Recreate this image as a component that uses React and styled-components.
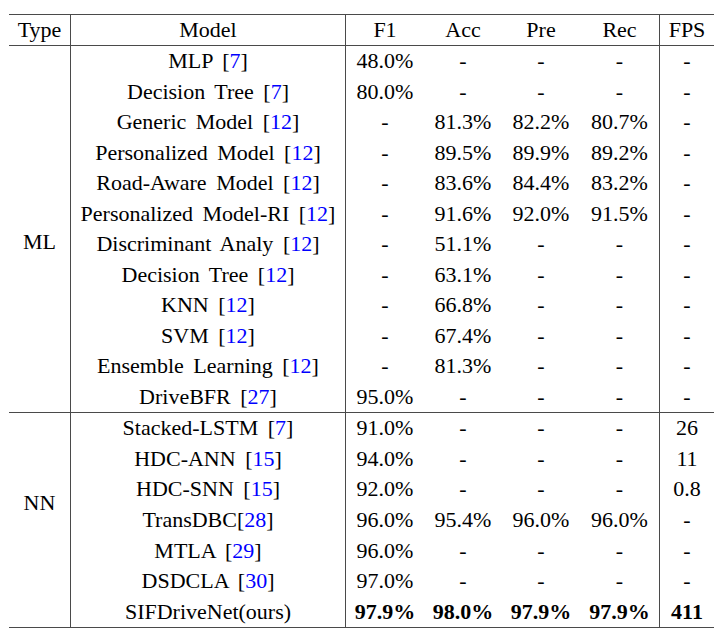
import React from "react";
import styled, { createGlobalStyle } from "styled-components";

const GlobalStyle = createGlobalStyle`
  html, body { margin: 0; padding: 0; background: #ffffff; }
  body {
    font-family: "Liberation Serif", "Times New Roman", serif;
    color: #000;
  }
`;

const LINE = "1px solid #4a4a4a";
const COLS = "62px 275px 78px 78px 78px 80px 54px";

const Page = styled.div`
  padding: 14px 0 0 9px;
`;

const Table = styled.div`
  width: 705px;
  border-top: ${LINE};
  border-bottom: ${LINE};
  font-family: "Liberation Serif", "Times New Roman", serif;
  font-size: 22px;
  line-height: 30px;
`;

const HeaderRow = styled.div`
  display: grid;
  grid-template-columns: ${COLS};
  grid-template-rows: 30px;
  border-bottom: ${LINE};
`;

const Section = styled.div`
  display: grid;
  grid-template-columns: ${COLS};
  grid-template-rows: repeat(${(p) => p.$rows}, ${(p) => p.$rowHeight}px);
  border-bottom: ${(p) => (p.$last ? "none" : LINE)};
`;

const Cell = styled.div`
  box-sizing: border-box;
  display: flex;
  align-items: center;
  justify-content: center;
  white-space: pre;
  font-weight: ${(p) => (p.$bold ? 700 : 400)};
  border-right: ${(p) => (p.$divider ? LINE : "none")};
`;

const ModelCell = styled(Cell)`
  word-spacing: 4px;
`;

const TypeCell = styled.div`
  box-sizing: border-box;
  grid-column: 1;
  grid-row: 1 / span ${(p) => p.$span};
  border-right: ${LINE};
  padding-top: ${(p) => p.$offset}px;
  text-align: center;
  line-height: 30px;
`;

const Cite = styled.span`
  color: #0000ff;
`;

const mlRows = [
  ["MLP", " ", "7", "48.0%", "-", "-", "-", "-"],
  ["Decision Tree", " ", "7", "80.0%", "-", "-", "-", "-"],
  ["Generic Model", " ", "12", "-", "81.3%", "82.2%", "80.7%", "-"],
  ["Personalized Model", " ", "12", "-", "89.5%", "89.9%", "89.2%", "-"],
  ["Road-Aware Model", " ", "12", "-", "83.6%", "84.4%", "83.2%", "-"],
  ["Personalized Model-RI", " ", "12", "-", "91.6%", "92.0%", "91.5%", "-"],
  ["Discriminant Analy", " ", "12", "-", "51.1%", "-", "-", "-"],
  ["Decision Tree", " ", "12", "-", "63.1%", "-", "-", "-"],
  ["KNN", " ", "12", "-", "66.8%", "-", "-", "-"],
  ["SVM", " ", "12", "-", "67.4%", "-", "-", "-"],
  ["Ensemble Learning", " ", "12", "-", "81.3%", "-", "-", "-"],
  ["DriveBFR", " ", "27", "95.0%", "-", "-", "-", "-"],
];

const nnRows = [
  ["Stacked-LSTM", " ", "7", "91.0%", "-", "-", "-", "26"],
  ["HDC-ANN", " ", "15", "94.0%", "-", "-", "-", "11"],
  ["HDC-SNN", " ", "15", "92.0%", "-", "-", "-", "0.8"],
  ["TransDBC", "", "28", "96.0%", "95.4%", "96.0%", "96.0%", "-"],
  ["MTLA", " ", "29", "96.0%", "-", "-", "-", "-"],
  ["DSDCLA", " ", "30", "97.0%", "-", "-", "-", "-"],
  ["SIFDriveNet(ours)", "", null, "97.9%", "98.0%", "97.9%", "97.9%", "411", true],
];

function ModelName({ name, sep, cite }) {
  return (
    <span>
      {name}
      {cite != null && (
        <>
          {sep}[<Cite>{cite}</Cite>]
        </>
      )}
    </span>
  );
}

function DataRow({ row }) {
  const [name, sep, cite, f1, acc, pre, rec, fps, bold] = row;
  return (
    <>
      <ModelCell $divider>
        <ModelName name={name} sep={sep} cite={cite} />
      </ModelCell>
      <Cell $bold={bold}>{f1}</Cell>
      <Cell $bold={bold}>{acc}</Cell>
      <Cell $bold={bold}>{pre}</Cell>
      <Cell $bold={bold} $divider>
        {rec}
      </Cell>
      <Cell $bold={bold}>{fps}</Cell>
    </>
  );
}

export default function App() {
  return (
    <>
      <GlobalStyle />
      <Page>
        <Table>
          <HeaderRow>
            <Cell $divider>Type</Cell>
            <Cell $divider>Model</Cell>
            <Cell>F1</Cell>
            <Cell>Acc</Cell>
            <Cell>Pre</Cell>
            <Cell $divider>Rec</Cell>
            <Cell>FPS</Cell>
          </HeaderRow>
          <Section $rows={mlRows.length} $rowHeight={30.5}>
            <TypeCell $span={mlRows.length} $offset={181}>
              ML
            </TypeCell>
            {mlRows.map((r, i) => (
              <DataRow key={i} row={r} />
            ))}
          </Section>
          <Section $rows={nnRows.length} $rowHeight={30.57} $last>
            <TypeCell $span={nnRows.length} $offset={75}>
              NN
            </TypeCell>
            {nnRows.map((r, i) => (
              <DataRow key={i} row={r} />
            ))}
          </Section>
        </Table>
      </Page>
    </>
  );
}
